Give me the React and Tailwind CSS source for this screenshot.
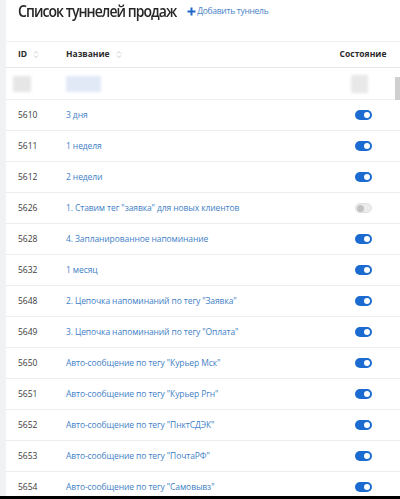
import React from "react";

const ROWS = [
  { id: 5610, name: "3 дня", on: true },
  { id: 5611, name: "1 неделя", on: true },
  { id: 5612, name: "2 недели", on: true },
  { id: 5626, name: "1. Ставим тег \"заявка\" для новых клиентов", on: false },
  { id: 5628, name: "4. Запланированное напоминание", on: true },
  { id: 5632, name: "1 месяц", on: true },
  { id: 5648, name: "2. Цепочка напоминаний по тегу \"Заявка\"", on: true },
  { id: 5649, name: "3. Цепочка напоминаний по тегу \"Оплата\"", on: true },
  { id: 5650, name: "Авто-сообщение по тегу \"Курьер Мск\"", on: true },
  { id: 5651, name: "Авто-сообщение по тегу \"Курьер Ргн\"", on: true },
  { id: 5652, name: "Авто-сообщение по тегу \"ПнктСДЭК\"", on: true },
  { id: 5653, name: "Авто-сообщение по тегу \"ПочтаРФ\"", on: true },
  { id: 5654, name: "Авто-сообщение по тегу \"Самовывз\"", on: true },
];

function SortIcon() {
  return (
    <svg width="6" height="9" viewBox="0 0 6 9" className="ml-[6px]">
      <path d="M1 3.5 L3 1.5 L5 3.5" fill="none" stroke="#c4c4c4" strokeWidth="0.9" />
      <path d="M1 5.5 L3 7.5 L5 5.5" fill="none" stroke="#c4c4c4" strokeWidth="0.9" />
    </svg>
  );
}

function Toggle({ on }) {
  return on ? (
    <div className="w-[17px] h-[10px] rounded-full bg-[#1b6bd0] flex items-center justify-end pr-[2px]">
      <div className="w-[6px] h-[6px] rounded-full bg-white" />
    </div>
  ) : (
    <div className="w-[17px] h-[10px] rounded-full bg-[#ececec] border border-[#e0e0e0] flex items-center pl-[1px]">
      <div className="w-[7px] h-[7px] rounded-full bg-[#c2c2c2]" />
    </div>
  );
}

export default function App() {
  return (
    <div className="w-[400px] h-[499px] overflow-hidden flex flex-col bg-white font-['Open_Sans',sans-serif]">
      <div className="flex-1 flex min-h-0">
        {/* left page edge */}
        <div className="w-[6px] bg-[#f1f2f4] shrink-0" />

        <div className="flex-1 min-w-0 overflow-hidden">
          {/* page title */}
          <div className="h-[41px] pl-[12px] flex items-start">
            <div className="flex items-center h-[21px]">
              <h1 className="text-[14px] font-semibold text-[#262626] tracking-[-0.95px] leading-none scale-y-110">
                Список туннелей продаж
              </h1>
              <button className="ml-[11px] mt-[2px] flex items-center text-[#4b84c6] text-[8.5px] tracking-[-0.3px]">
                <svg width="9" height="9" viewBox="0 0 9 9" className="mr-[1px]">
                  <path d="M4.5 0.5 V8.5 M0.5 4.5 H8.5" stroke="#1e66c8" strokeWidth="2" />
                </svg>
                Добавить туннель
              </button>
            </div>
          </div>

          {/* table header */}
          <div className="grid grid-cols-[60px_1fr_56px] pr-[9px] h-[27px] items-center border-t border-[#f0f0f0] border-b border-b-[#e6e6e6] text-[8.5px] font-bold text-[#2b2b2b]">
            <div className="pl-[12px] flex items-center">
              ID <SortIcon />
            </div>
            <div className="flex items-center">
              Название <SortIcon />
            </div>
            <div className="text-center">Состояние</div>
          </div>

          {/* blurred filter row */}
          <div className="relative h-[32px] border-b border-[#efefef]">
            <div className="absolute left-[7px] top-[8px] w-[18px] h-[16px] bg-[#e6e6e6] blur-[1.5px]" />
            <div className="absolute left-[60px] top-[8px] w-[35px] h-[16px] bg-[#e1e9f7] blur-[1.5px]" />
            <div className="absolute left-[345px] top-[7px] w-[17px] h-[18px] bg-[#e8e8e8] blur-[1.5px]" />
            <div className="absolute right-0 top-[9px] w-[5px] h-[23px] bg-[#cfcfcf]" />
          </div>

          {/* rows */}
          {ROWS.map((r) => (
            <div
              key={r.id}
              className="grid grid-cols-[60px_1fr_56px] pr-[9px] h-[31px] items-center border-b border-[#ededed] text-[8.5px]"
            >
              <div className="pl-[12px] text-[#3a3a3a]">{r.id}</div>
              <div className="text-[#3f7fc6] whitespace-nowrap tracking-[-0.1px]">{r.name}</div>
              <div className="flex justify-center">
                <Toggle on={r.on} />
              </div>
            </div>
          ))}
        </div>
      </div>
      <div className="h-[3px] bg-black shrink-0" />
    </div>
  );
}
